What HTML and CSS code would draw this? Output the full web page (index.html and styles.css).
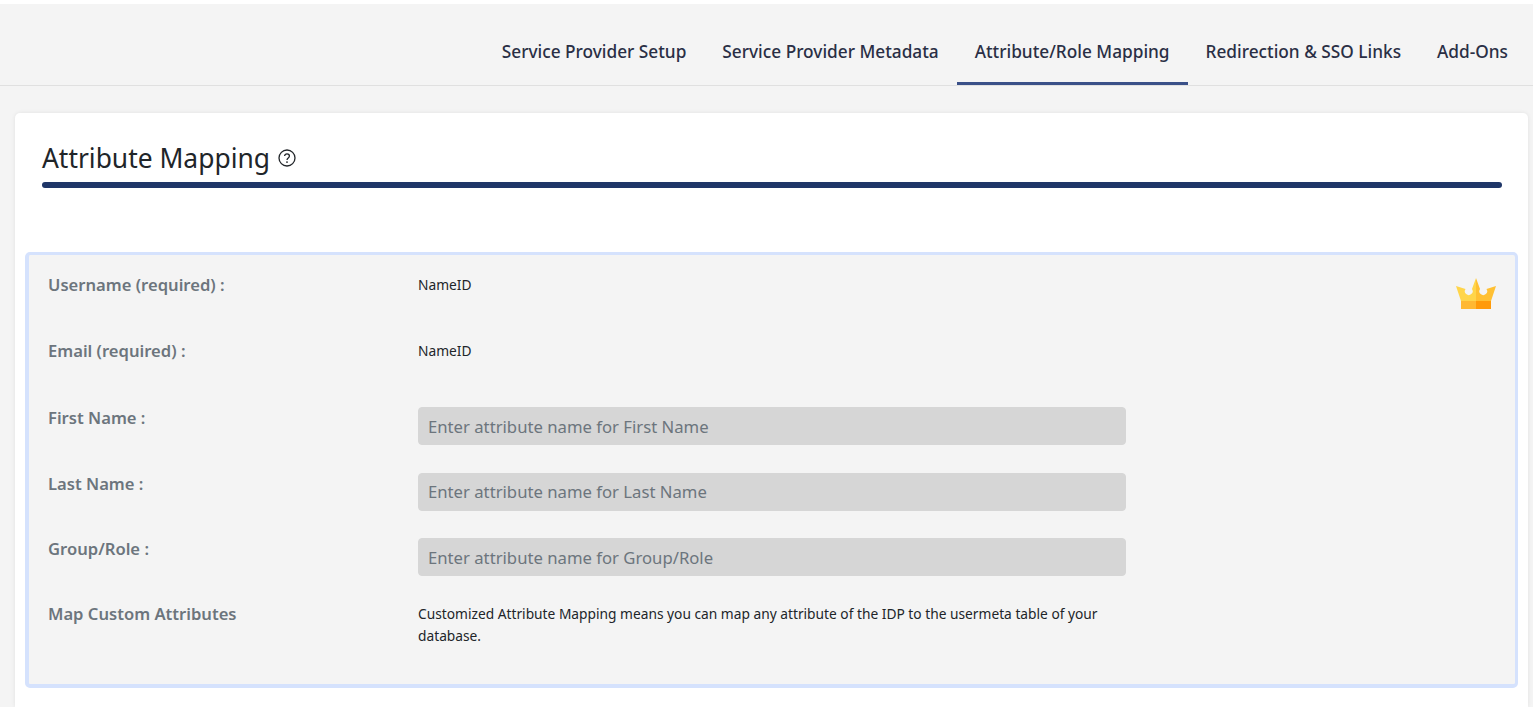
FILE: index.html
```html
<!DOCTYPE html>
<html lang="en">
  <head>
    <meta charset="UTF-8" />
    <meta name="viewport" content="width=device-width, initial-scale=1.0" />
    <title>Attribute Mapping</title>
    <link rel="stylesheet" href="styles.css">
  </head>
  <body>
    <div id="navbar">
      <ul>
        <li><a href="#">Service Provider Setup</a></li>
        <li><a href="#">Service Provider Metadata</a></li>
        <li><a href="#" class="active">Attribute/Role Mapping</a></li>
        <li><a href="#">Redirection &amp; SSO Links</a></li>
        <li><a href="#">Add-Ons</a></li>
      </ul>
    </div>

    <div class="content">
      <div class="card">
        <div class="cardTitle">
          <h2>Attribute Mapping</h2>
          <svg class="helpIcon" viewBox="0 0 18 18" width="18" height="18">
            <circle cx="9" cy="9" r="8" fill="none" stroke="#212529" stroke-width="1.3" />
            <path d="M6.6 7.1c0-1.4 1.1-2.3 2.4-2.3s2.4.9 2.4 2.2c0 1.9-2.4 1.9-2.4 3.9" fill="none" stroke="#212529" stroke-width="1.3" />
            <circle cx="9" cy="13.1" r=".9" fill="#212529" />
          </svg>
        </div>
        <div class="rule"></div>

        <div class="panel">
          <svg class="crown" viewBox="0 0 40 32" width="40" height="32">
            <path d="M0 8 9.5 11A3.9 3.9 0 1 0 16 11L20 0V23H5Z" fill="#ffd54a" />
            <path d="M40 8 30.5 11A3.9 3.9 0 1 1 24 11L20 0V23H35Z" fill="#ffc033" />
            <path d="M5 23H20V31H5Z" fill="#ffb833" />
            <path d="M20 23H35V31H20Z" fill="#ff9a0a" />
          </svg>

          <div class="row">
            <label>Username (required) :</label>
            <span class="value">NameID</span>
          </div>
          <div class="row">
            <label>Email (required) :</label>
            <span class="value">NameID</span>
          </div>
          <div class="row inputRow">
            <label>First Name :</label>
            <input type="text" placeholder="Enter attribute name for First Name" disabled />
          </div>
          <div class="row inputRow">
            <label>Last Name :</label>
            <input type="text" placeholder="Enter attribute name for Last Name" disabled />
          </div>
          <div class="row inputRow">
            <label>Group/Role :</label>
            <input type="text" placeholder="Enter attribute name for Group/Role" disabled />
          </div>
          <div class="row lastRow">
            <label>Map Custom Attributes</label>
            <p class="value">Customized Attribute Mapping means you can map any attribute of the IDP to the usermeta table of your database.</p>
          </div>
        </div>
      </div>
    </div>
  </body>
</html>
```

FILE: styles.css
```css
html {
  margin: 0;
  padding: 0;
}

body {
  margin: 0;
  padding-top: 4px;
  height: 707px;
  box-sizing: border-box;
  overflow: hidden;
  display: flex;
  flex-direction: column;
  background: #fff;
  font-family: "Noto Sans", "Open Sans", sans-serif;
  color: #212529;
}

#navbar {
  height: 82px;
  box-sizing: border-box;
  flex-shrink: 0;
  background: #f4f4f4;
  border-bottom: 1px solid #e0e0e0;
  padding-right: 7px;
}

#navbar ul {
  list-style-type: none;
  margin: 0;
  padding: 0;
  height: 100%;
  display: flex;
  justify-content: flex-end;
}

#navbar ul li {
  display: flex;
}

#navbar ul li a {
  display: flex;
  align-items: center;
  box-sizing: border-box;
  padding: 16px 18px 0;
  border-bottom: 3px solid transparent;
  text-decoration: none;
  font-size: 17.25px;
  font-weight: 500;
  color: #2a2f45;
}

#navbar ul li a.active {
  border-bottom-color: #3a5088;
}

.content {
  flex: 1;
  min-height: 0;
  background: #f4f4f4;
  padding: 27px 5px 0 15px;
}

.card {
  height: 100%;
  padding: 0 10px;
  background: #fff;
  border-radius: 5px 5px 0 0;
  box-shadow: 0 0 4px rgba(0, 0, 0, 0.08);
}

.cardTitle {
  display: flex;
  align-items: center;
  gap: 8px;
  height: 69px;
  padding: 20px 0 0 17px;
  box-sizing: border-box;
}

.cardTitle h2 {
  margin: 0;
  font-size: 26.4px;
  font-weight: 400;
  line-height: 36px;
}

.rule {
  height: 6px;
  margin: 0 16px 0 17px;
  background: #1f3668;
  border-radius: 3px;
}

.panel {
  position: relative;
  box-sizing: border-box;
  height: 436px;
  margin-top: 64px;
  padding-left: 19px;
  background: #f4f4f4;
  border: solid #d5e2fd;
  border-width: 3px 3px 4px 4px;
  border-radius: 5px;
}

.crown {
  position: absolute;
  top: 23px;
  right: 19px;
}

.row {
  display: grid;
  grid-template-columns: 370px 708px;
  height: 65.6px;
  padding-top: 18px;
  box-sizing: border-box;
}

.row label {
  font-size: 16.6px;
  font-weight: 600;
  line-height: 24px;
  color: #6c757d;
}

.row .value {
  margin: 1px 0 0;
  font-size: 13.75px;
  line-height: 22px;
}

.inputRow {
  padding-top: 20px;
}

.lastRow {
  padding-top: 19px;
}

.row input {
  box-sizing: border-box;
  height: 38px;
  margin-top: 1px;
  padding: 0 9px;
  border: 1px solid #d6d6d6;
  border-radius: 4px;
  background: #d6d6d6;
  font-family: inherit;
  font-size: 16.7px;
}

.row input::placeholder {
  color: #6c757d;
  opacity: 1;
}
```
